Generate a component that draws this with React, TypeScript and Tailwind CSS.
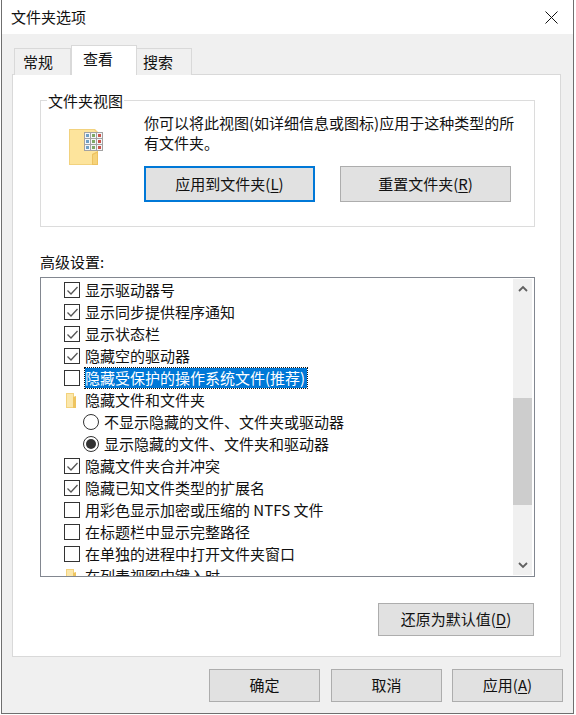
const FONT = "font-['Microsoft_YaHei','Noto_Sans_CJK_SC','Noto_Sans',sans-serif]";

const rows = [
  { kind: 'check', checked: true, label: '显示驱动器号' },
  { kind: 'check', checked: true, label: '显示同步提供程序通知' },
  { kind: 'check', checked: true, label: '显示状态栏' },
  { kind: 'check', checked: true, label: '隐藏空的驱动器' },
  { kind: 'check', checked: false, label: '隐藏受保护的操作系统文件(推荐)', selected: true },
  { kind: 'folder', label: '隐藏文件和文件夹' },
  { kind: 'radio', checked: false, label: '不显示隐藏的文件、文件夹或驱动器' },
  { kind: 'radio', checked: true, label: '显示隐藏的文件、文件夹和驱动器' },
  { kind: 'check', checked: true, label: '隐藏文件夹合并冲突' },
  { kind: 'check', checked: true, label: '隐藏已知文件类型的扩展名' },
  { kind: 'check', checked: false, label: '用彩色显示加密或压缩的 NTFS 文件' },
  { kind: 'check', checked: false, label: '在标题栏中显示完整路径' },
  { kind: 'check', checked: false, label: '在单独的进程中打开文件夹窗口' },
  { kind: 'folder', label: '在列表视图中键入时' },
];

function Btn({ label, hot, className = '' }: { label: string; hot?: string; className?: string }) {
  return (
    <button className={`flex items-center justify-center bg-[#e1e1e1] border border-[#adadad] text-[15px] text-[#111] ${className}`}>
      {label}
      {hot && (
        <span>
          (<span className="underline underline-offset-2">{hot}</span>)
        </span>
      )}
    </button>
  );
}

function SmallFolder() {
  return (
    <svg width="10" height="15" viewBox="0 0 10 15" className="shrink-0">
      <path d="M0 0h8v15H0z" fill="#f3d27c" />
      <path d="M1 1h6v13H1z" fill="#fbe7ab" />
      <path d="M7 4l3-1v12H7z" fill="#eec45f" />
    </svg>
  );
}

const THUMBS = ['#6f9fc4', '#7fa765', '#c9534a'];

function BigFolder() {
  return (
    <svg width="34" height="36" viewBox="0 0 34 36">
      <path d="M0 0h26l3 3v33H0z" fill="#f2d27e" />
      <path d="M1 1h24l3 3v31H1z" fill="#fde49c" />
      <path d="M23 25l6-3v14h-6z" fill="#edc260" />
      <path d="M24 26l4-2v11h-4z" fill="#f6d37a" />
      <rect x="15" y="3" width="19" height="19" fill="#a3a3a3" />
      {[0, 1, 2].map((r) =>
        [0, 1, 2].map((c) => (
          <g key={`${r}-${c}`}>
            <rect x={16 + c * 6} y={4 + r * 6} width="5" height="5" fill="#f4f6f8" />
            <rect x={17 + c * 6} y={5 + r * 6} width="3" height="3" fill={THUMBS[c]} />
          </g>
        )),
      )}
    </svg>
  );
}

function Row({ row }: { row: (typeof rows)[number] }) {
  return (
    <div className={`flex items-center h-[22px] shrink-0 whitespace-nowrap ${row.kind === 'radio' ? 'pl-[42px]' : row.kind === 'folder' ? 'pl-[25px]' : 'pl-[23px]'}`}>
      {row.kind === 'check' && (
        <span className="w-[16px] h-[16px] border border-[#333] bg-white flex items-center justify-center shrink-0">
          {row.checked && (
            <svg width="11" height="9" viewBox="0 0 11 9" fill="none" stroke="#555" strokeWidth="1.3">
              <path d="M0.5 4.5L4 8L10.5 1" />
            </svg>
          )}
        </span>
      )}
      {row.kind === 'radio' && (
        <span className="w-[16px] h-[16px] rounded-full border border-[#333] bg-white flex items-center justify-center shrink-0">
          {row.checked && <span className="w-[10px] h-[10px] rounded-full bg-[#333]" />}
        </span>
      )}
      {row.kind === 'folder' && <SmallFolder />}
      <span
        className={`text-[15px] leading-[20px] ${row.kind === 'radio' ? 'ml-[5px]' : row.kind === 'folder' ? 'ml-[9px]' : 'ml-[5px]'} ${
          row.selected ? 'bg-[#0078d7] text-white outline-1 outline-dotted outline-[#111] pr-[2px]' : 'text-[#111]'
        }`}
      >
        {row.label}
      </span>
    </div>
  );
}

function Chevron({ up }: { up?: boolean }) {
  return (
    <svg width="10" height="7" viewBox="0 0 10 7" fill="none" stroke="#606060" strokeWidth="1.8">
      <path d={up ? 'M1 6L5 2L9 6' : 'M1 1L5 5L9 1'} />
    </svg>
  );
}

export default function App() {
  return (
    <div className={`w-[576px] h-[715px] bg-white flex flex-col overflow-hidden text-[#111] ${FONT}`}>
      <div className="flex flex-col flex-1 ml-[1px] mr-[2px] mb-[1px] bg-[#f0f0f0] border-l border-r border-b border-[#6f6f6f]">
        {/* Title bar */}
        <div className="h-[34px] bg-white flex items-center justify-between pl-[9px] pr-[15px] shrink-0">
          <span className="text-[15px]">文件夹选项</span>
          <svg width="13" height="13" viewBox="0 0 13 13" stroke="#111" strokeWidth="1" fill="none">
            <path d="M0.5 0.5L12.5 12.5M12.5 0.5L0.5 12.5" />
          </svg>
        </div>

        {/* Tabs */}
        <div className="flex items-end h-[41px] pl-[12px] shrink-0 relative z-10 -mb-[1px]">
          <div className="w-[57px] h-[27px] border border-b-0 border-[#d9d9d9] bg-[#f0f0f0] flex items-center pl-[8px] text-[15px]">常规</div>
          <div className="w-[66px] h-[30px] border border-b-0 border-[#d9d9d9] bg-white flex items-center pl-[11px] text-[15px] pb-[3px]">查看</div>
          <div className="w-[55px] h-[27px] border border-l-0 border-b-0 border-[#d9d9d9] bg-[#f0f0f0] flex items-center pl-[6px] text-[15px]">搜索</div>
        </div>

        {/* Panel */}
        <div className="ml-[10px] w-[549px] h-[583px] bg-white border border-[#d9d9d9] pt-[25px] pl-[27px] shrink-0">
          <div className="relative w-[495px] h-[127px] border border-[#dcdcdc] flex">
            <span className="absolute -top-[10px] left-[6px] bg-white px-px text-[15px] leading-[20px]">文件夹视图</span>
            <div className="w-[103px] pl-[28px] pt-[28px] shrink-0">
              <BigFolder />
            </div>
            <div className="flex flex-col pt-[12px] text-[15px]">
              <p className="w-[376px] leading-[20px]">你可以将此视图(如详细信息或图标)应用于这种类型的所有文件夹。</p>
              <div className="flex gap-[25px] mt-[13px]">
                <Btn label="应用到文件夹" hot="L" className="w-[171px] h-[36px] !border-2 !border-[#0078d7]" />
                <Btn label="重置文件夹" hot="R" className="w-[171px] h-[36px]" />
              </div>
            </div>
          </div>

          <div className="text-[15px] leading-[20px] mt-[25px] mb-[5px]">高级设置:</div>

          <div className="w-[495px] h-[300px] border border-[#828790] bg-white flex overflow-hidden">
            <div className="flex-1 flex flex-col overflow-hidden pt-px">
              {rows.map((row) => (
                <Row key={row.label} row={row} />
              ))}
            </div>
            <div className="w-[19px] mr-[2px] my-[1px] bg-[#f0f0f0] flex flex-col items-center shrink-0">
              <div className="h-[19px] flex items-center justify-center">
                <Chevron up />
              </div>
              <div className="h-[100px]" />
              <div className="h-[107px] w-full bg-[#cdcdcd]" />
              <div className="flex-1" />
              <div className="h-[19px] flex items-center justify-center">
                <Chevron />
              </div>
            </div>
          </div>

          <div className="flex justify-end w-[494px] mt-[26px]">
            <Btn label="还原为默认值" hot="D" className="w-[156px] h-[33px]" />
          </div>
        </div>

        {/* Footer */}
        <div className="flex justify-end gap-[10px] pr-[10px] pt-[12px]">
          <Btn label="确定" className="w-[111px] h-[33px] mr-px" />
          <Btn label="取消" className="w-[111px] h-[33px]" />
          <Btn label="应用" hot="A" className="w-[111px] h-[33px]" />
        </div>
      </div>
    </div>
  );
}
